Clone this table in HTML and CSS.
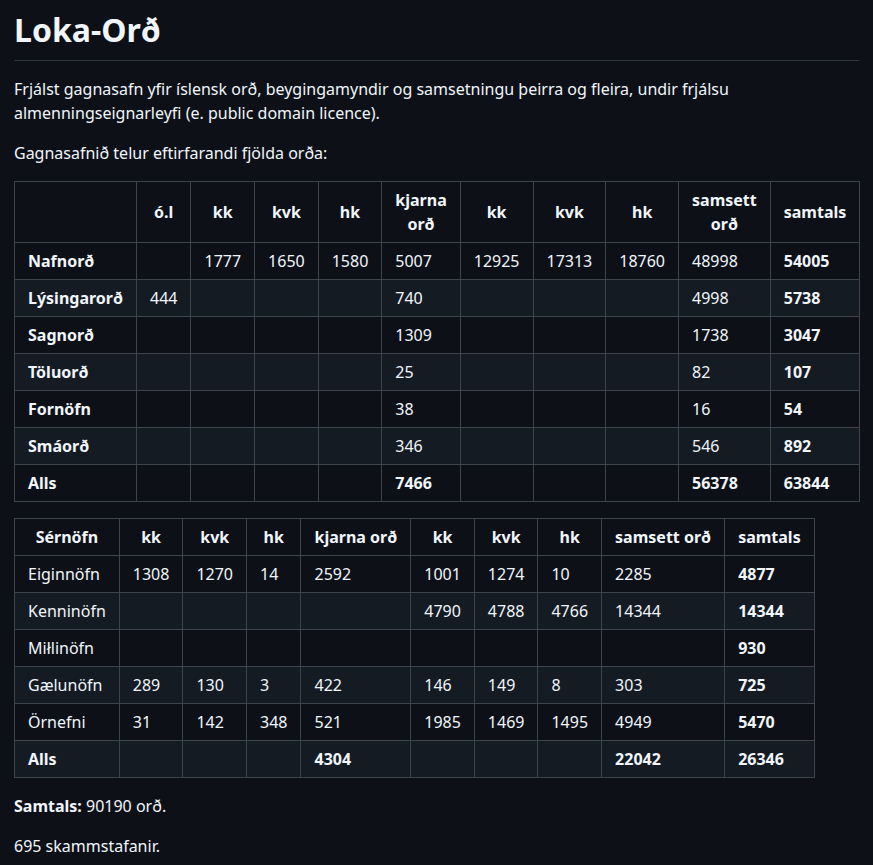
FILE: index.html
```html
<!DOCTYPE html>
<html lang="is">
<head>
<meta charset="utf-8">
<title>Loka-Orð</title>
<link rel="stylesheet" href="styles.css">
</head>
<body>
<article class="markdown-body">
<h1>Loka-Orð</h1>
<p>Frjálst gagnasafn yfir íslensk orð, beygingamyndir og samsetningu þeirra og fleira, undir frjálsu almenningseignarleyfi (e. public domain licence).</p>
<p>Gagnasafnið telur eftirfarandi fjölda orða:</p>
<table>
<thead>
<tr><th></th><th>ó.l</th><th>kk</th><th>kvk</th><th>hk</th><th>kjarna orð</th><th>kk</th><th>kvk</th><th>hk</th><th>samsett orð</th><th>samtals</th></tr>
</thead>
<tbody>
<tr><td><strong>Nafnorð</strong></td><td></td><td>1777</td><td>1650</td><td>1580</td><td>5007</td><td>12925</td><td>17313</td><td>18760</td><td>48998</td><td><strong>54005</strong></td></tr>
<tr><td><strong>Lýsingarorð</strong></td><td>444</td><td></td><td></td><td></td><td>740</td><td></td><td></td><td></td><td>4998</td><td><strong>5738</strong></td></tr>
<tr><td><strong>Sagnorð</strong></td><td></td><td></td><td></td><td></td><td>1309</td><td></td><td></td><td></td><td>1738</td><td><strong>3047</strong></td></tr>
<tr><td><strong>Töluorð</strong></td><td></td><td></td><td></td><td></td><td>25</td><td></td><td></td><td></td><td>82</td><td><strong>107</strong></td></tr>
<tr><td><strong>Fornöfn</strong></td><td></td><td></td><td></td><td></td><td>38</td><td></td><td></td><td></td><td>16</td><td><strong>54</strong></td></tr>
<tr><td><strong>Smáorð</strong></td><td></td><td></td><td></td><td></td><td>346</td><td></td><td></td><td></td><td>546</td><td><strong>892</strong></td></tr>
<tr><td><strong>Alls</strong></td><td></td><td></td><td></td><td></td><td><strong>7466</strong></td><td></td><td></td><td></td><td><strong>56378</strong></td><td><strong>63844</strong></td></tr>
</tbody>
</table>
<table>
<thead>
<tr><th>Sérnöfn</th><th>kk</th><th>kvk</th><th>hk</th><th>kjarna orð</th><th>kk</th><th>kvk</th><th>hk</th><th>samsett orð</th><th>samtals</th></tr>
</thead>
<tbody>
<tr><td>Eiginnöfn</td><td>1308</td><td>1270</td><td>14</td><td>2592</td><td>1001</td><td>1274</td><td>10</td><td>2285</td><td><strong>4877</strong></td></tr>
<tr><td>Kenninöfn</td><td></td><td></td><td></td><td></td><td>4790</td><td>4788</td><td>4766</td><td>14344</td><td><strong>14344</strong></td></tr>
<tr><td>Miłlinöfn</td><td></td><td></td><td></td><td></td><td></td><td></td><td></td><td></td><td><strong>930</strong></td></tr>
<tr><td>Gælunöfn</td><td>289</td><td>130</td><td>3</td><td>422</td><td>146</td><td>149</td><td>8</td><td>303</td><td><strong>725</strong></td></tr>
<tr><td>Örnefni</td><td>31</td><td>142</td><td>348</td><td>521</td><td>1985</td><td>1469</td><td>1495</td><td>4949</td><td><strong>5470</strong></td></tr>
<tr><td><strong>Alls</strong></td><td></td><td></td><td></td><td><strong>4304</strong></td><td></td><td></td><td></td><td><strong>22042</strong></td><td><strong>26346</strong></td></tr>
</tbody>
</table>
<p><strong>Samtals:</strong> 90190 orð.</p>
<p>695 skammstafanir.</p>
</article>
</body>
</html>
```

FILE: styles.css
```css
html, body {
  margin: 0;
  padding: 0;
  background: #0d1117;
}

.markdown-body {
  padding: 10px 14px;
  color: #f0f6fc;
  font-family: "Noto Sans", "Open Sans", sans-serif;
  font-size: 16px;
  line-height: 1.5;
  word-wrap: break-word;
}

.markdown-body h1 {
  margin: 0 0 16px;
  padding-bottom: 0.3em;
  font-size: 2em;
  font-weight: 700;
  line-height: 1.25;
  border-bottom: 1px solid #3d444db3;
}

.markdown-body p {
  margin: 0 0 16px;
}

.markdown-body strong {
  font-weight: 700;
}

.markdown-body table {
  max-width: 100%;
  border-spacing: 0;
  border-collapse: collapse;
  margin: 0 0 16px;
}

.markdown-body table tr {
  background-color: #0d1117;
  border-top: 1px solid #3d444db3;
}

.markdown-body table tr:nth-child(2n) {
  background-color: #151b23;
}

.markdown-body table th,
.markdown-body table td {
  padding: 6px 13px;
  border: 1px solid #3d444d;
}

.markdown-body table th {
  font-weight: 700;
}
```
